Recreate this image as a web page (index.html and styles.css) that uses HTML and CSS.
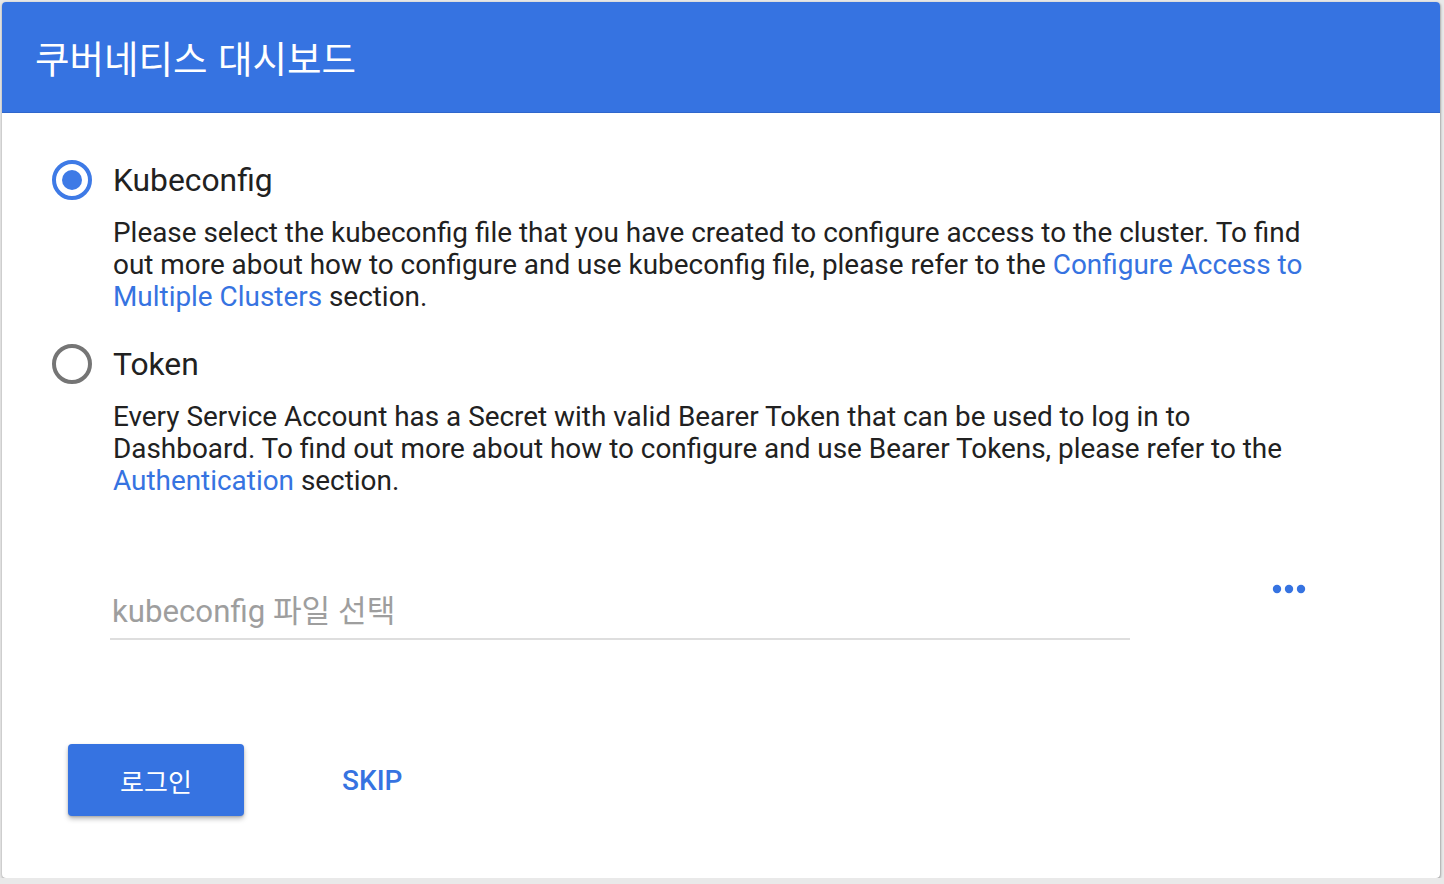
FILE: index.html
```html
<!DOCTYPE html>
<html lang="ko">
<head>
<meta charset="utf-8">
<title>쿠버네티스 대시보드</title>
<link rel="stylesheet" href="styles.css">
</head>
<body>
<div class="card">
  <header class="card-header">
    <h1 class="title">쿠버네티스 대시보드</h1>
  </header>
  <main class="card-body">
    <div class="option">
      <label class="radio-row">
        <span class="radio checked"><span class="dot"></span></span>
        <span class="radio-label">Kubeconfig</span>
      </label>
      <p class="desc">Please select the kubeconfig file that you have created to configure access to the cluster. To find out more about how to configure and use kubeconfig file, please refer to the <a class="link" href="#">Configure Access to Multiple Clusters</a> section.</p>
    </div>
    <div class="option">
      <label class="radio-row">
        <span class="radio"></span>
        <span class="radio-label">Token</span>
      </label>
      <p class="desc">Every Service Account has a Secret with valid Bearer Token that can be used to log in to Dashboard. To find out more about how to configure and use Bearer Tokens, please refer to the <a class="link" href="#">Authentication</a> section.</p>
    </div>
    <div class="file-row">
      <div class="file-input"><span class="placeholder">kubeconfig 파일 선택</span></div>
      <button class="more" type="button" aria-label="more">
        <svg width="34" height="10" viewBox="0 0 34 10"><circle cx="5" cy="5" r="4.2" fill="#3673e1"/><circle cx="17" cy="5" r="4.2" fill="#3673e1"/><circle cx="29" cy="5" r="4.2" fill="#3673e1"/></svg>
      </button>
    </div>
    <div class="actions">
      <button class="btn-primary" type="button">로그인</button>
      <button class="btn-text" type="button">SKIP</button>
    </div>
  </main>
</div>
</body>
</html>
```
FILE: styles.css
```css
html, body {
  margin: 0;
  padding: 0;
}
body {
  background: #e9e9e9;
  font-family: Roboto, "Noto Sans CJK KR", sans-serif;
  color: #212121;
}
.card {
  margin: 2px 0 0 2px;
  width: 1438px;
  height: 876px;
  background: #ffffff;
  border-radius: 4px;
  overflow: hidden;
  box-shadow: 0 1px 3px rgba(0,0,0,0.3), 1px 1px 2px rgba(0,0,0,0.15);
  display: flex;
  flex-direction: column;
}
.card-header {
  height: 110px;
  background: #3673e1;
  border-bottom: 1px solid #2f66cc;
  display: flex;
  align-items: center;
  padding-left: 33px;
}
.title {
  margin: 0 0 2px 0;
  font-family: "Noto Sans CJK KR", Roboto, sans-serif;
  font-weight: 400;
  font-size: 37.5px;
  color: #ffffff;
}
.card-body {
  padding: 47px 0 0 50px;
  display: flex;
  flex-direction: column;
}
.option + .option {
  margin-top: 31px;
}
.radio-row {
  display: flex;
  align-items: center;
  height: 40px;
}
.radio {
  width: 40px;
  height: 40px;
  box-sizing: border-box;
  border: 4px solid #757575;
  border-radius: 50%;
  display: flex;
  align-items: center;
  justify-content: center;
  flex: none;
}
.radio.checked {
  border-color: #3e7ae6;
}
.dot {
  width: 20px;
  height: 20px;
  border-radius: 50%;
  background: #3e7ae6;
}
.radio-label {
  margin-left: 21px;
  font-size: 31.8px;
  color: #212121;
}
.desc {
  margin: 17px 0 0 61px;
  width: 1196px;
  font-size: 27.9px;
  line-height: 32px;
  color: #212121;
}
.link {
  color: #3673e1;
  text-decoration: none;
}
.file-row {
  display: flex;
  align-items: flex-start;
  margin-top: 88px;
}
.file-input {
  margin-left: 58px;
  width: 1020px;
  height: 53px;
  border-bottom: 2px solid #dedede;
  display: flex;
  align-items: center;
}
.placeholder {
  margin: 0 0 6px 2px;
  font-size: 31.2px;
  color: #9e9e9e;
  font-family: Roboto, "Noto Sans CJK KR", sans-serif;
}
.more {
  margin-left: 142px;
  margin-top: -1px;
  padding: 0;
  border: 0;
  background: transparent;
  display: flex;
}
.actions {
  display: flex;
  align-items: center;
  margin-top: 104px;
  margin-left: 16px;
}
.btn-primary {
  width: 176px;
  height: 72px;
  border: 0;
  border-radius: 4px;
  background: #3673e1;
  color: #ffffff;
  font-family: "Noto Sans CJK KR", Roboto, sans-serif;
  font-size: 26px;
  box-shadow: 0 3px 5px rgba(0,0,0,0.25), 0 1px 2px rgba(0,0,0,0.15);
}
.btn-text {
  margin-left: 98px;
  border: 0;
  background: transparent;
  padding: 0;
  color: #3673e1;
  font-family: Roboto, sans-serif;
  font-weight: 500;
  font-size: 28px;
}
```
